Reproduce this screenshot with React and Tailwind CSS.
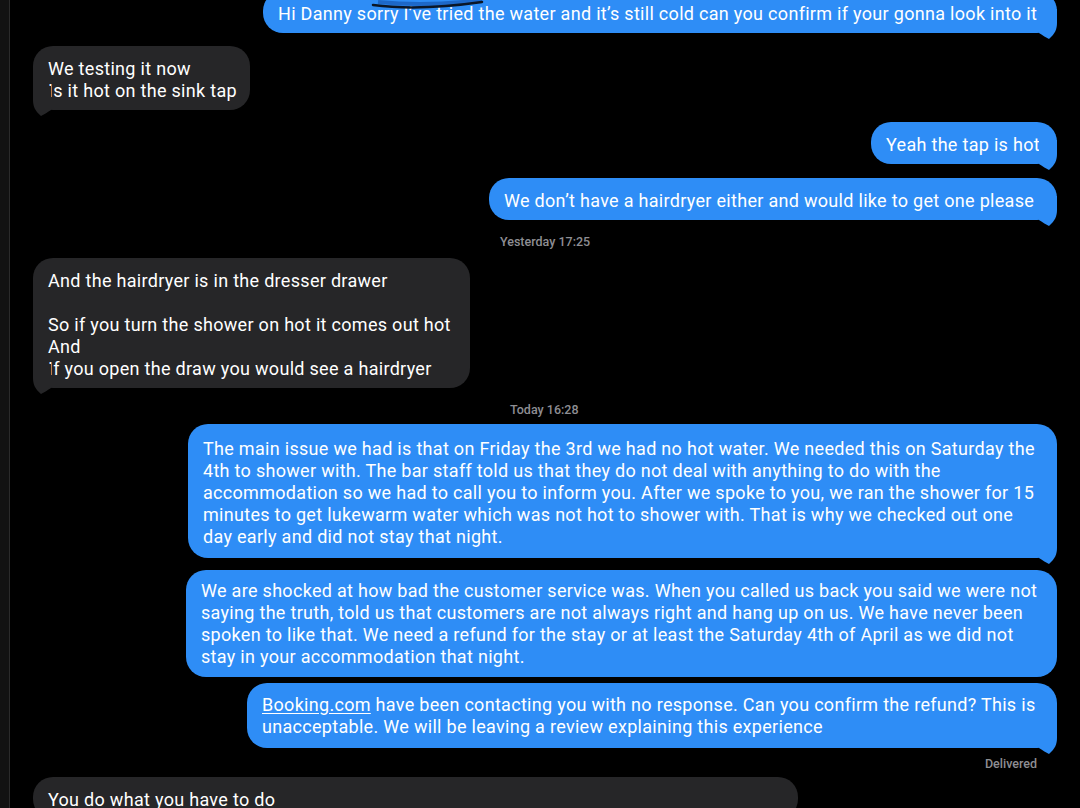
import React from 'react';

const font = { fontFamily: 'Roboto, "Liberation Sans", Arial, sans-serif' };

const Tail = ({ side }) => (
  <svg
    width="22"
    height="30"
    viewBox="0 0 22 30"
    className={
      side === 'right'
        ? 'absolute right-[-2px] bottom-[-6px]'
        : 'absolute left-[-2px] bottom-[-6px] -scale-x-100'
    }
  >
    <path
      d="M20 0 L20 14 C20 20 18 25 12 30 C9 28.5 6 26.5 2 24 L2 0 Z"
      className={side === 'right' ? 'fill-[#2e8df6]' : 'fill-[#262628]'}
    />
  </svg>
);

const Lines = ({ lines }) =>
  lines.map((l, i) => <div key={i}>{l === '' ? '\u00a0' : l}</div>);

const Sent = ({ width, className = '', children, tail = true, textClass = 'pt-[12px] pb-[8px]' }) => (
  <div className={`flex justify-end ${className}`}>
    <div
      className={`relative ${width} rounded-[20px] bg-[#2e8df6] px-[15px] text-[18px] tracking-[0.3px] text-white leading-[22px] whitespace-nowrap ${textClass}`}
    >
      {children}
      {tail && <Tail side="right" />}
    </div>
  </div>
);

const Received = ({ width, className = '', children, tail = true, textClass = 'pt-[12px] pb-[8px]' }) => (
  <div className={`flex justify-start ${className}`}>
    <div
      className={`relative ${width} rounded-[20px] bg-[#262628] px-[15px] text-[18px] tracking-[0.3px] text-white leading-[22px] whitespace-nowrap ${textClass}`}
    >
      {children}
      {tail && <Tail side="left" />}
    </div>
  </div>
);

const Stamp = ({ children, className = '' }) => (
  <div className={`text-[12.5px] font-medium text-[#8e8e93] leading-[16px] ${className}`}>{children}</div>
);

export default function App() {
  return (
    <div className="flex h-[808px] w-[1080px] overflow-hidden bg-black" style={font}>
      <div className="w-[10px] shrink-0 bg-[#121212] border-r border-[#2b2b2b]" />
      <div className="flex flex-1 flex-col px-[23px]">
        <Sent width="w-[794px]" className="mt-[-9px]">
          Hi Danny sorry I’ve tried the water and it’s still cold can you confirm if your gonna look into it
          {/* marker scribble over the top of the bubble */}
          <svg width="120" height="10" viewBox="0 0 120 10" className="absolute left-[107px] top-[9px]">
            <path d="M8 2 C40 5 80 4 112 0" stroke="#1d68c8" strokeWidth="4" fill="none" />
            <path d="M3 5 C30 8.5 70 8 112 2" stroke="#0b1626" strokeWidth="2.5" fill="none" strokeLinecap="round" />
          </svg>
        </Sent>

        <Received width="w-[217px]" className="mt-[13px]">
          <Lines lines={['We testing it now', 'Is it hot on the sink tap']} />
        </Received>

        <Sent width="w-[186px]" className="mt-[12px]">
          Yeah the tap is hot
        </Sent>

        <Sent width="w-[568px]" className="mt-[14px]">
          We don’t have a hairdryer either and would like to get one please
        </Sent>

        <Stamp className="mt-[14px] pl-[467px]">Yesterday 17:25</Stamp>

        <Received width="w-[437px]" className="mt-[8px]">
          <Lines
            lines={[
              'And the hairdryer is in the dresser drawer',
              '',
              'So if you turn the shower on hot it comes out hot',
              'And',
              'If you open the draw you would see a hairdryer',
            ]}
          />
        </Received>

        <Stamp className="mt-[14px] pl-[477px]">Today 16:28</Stamp>

        <Sent width="w-[869px]" className="mt-[6px]" textClass="pt-[14px] pb-[10px]">
          <Lines
            lines={[
              'The main issue we had is that on Friday the 3rd we had no hot water. We needed this on Saturday the',
              '4th to shower with. The bar staff told us that they do not deal with anything to do with the',
              'accommodation so we had to call you to inform you. After we spoke to you, we ran the shower for 15',
              'minutes to get lukewarm water which was not hot to shower with. That is why we checked out one',
              'day early and did not stay that night.',
            ]}
          />
        </Sent>

        <Sent width="w-[871px]" className="mt-[12px]" tail={false} textClass="pt-[10px] pb-[9px]">
          <Lines
            lines={[
              'We are shocked at how bad the customer service was. When you called us back you said we were not',
              'saying the truth, told us that customers are not always right and hang up on us. We have never been',
              'spoken to like that. We need a refund for the stay or at least the Saturday 4th of April as we did not',
              'stay in your accommodation that night.',
            ]}
          />
        </Sent>

        <Sent width="w-[810px]" className="mt-[6px]" textClass="pt-[11px] pb-[10px]">
          <div>
            <span className="underline underline-offset-2">Booking.com</span> have been contacting you with no
            response. Can you confirm the refund? This is
          </div>
          <div>unacceptable. We will be leaving a review explaining this experience</div>
        </Sent>

        <Stamp className="mt-[8px] text-right pr-[20px]">Delivered</Stamp>

        <Received width="w-[765px]" className="mt-[5px]" tail={false}>
          You do what you have to do
        </Received>
      </div>
    </div>
  );
}
